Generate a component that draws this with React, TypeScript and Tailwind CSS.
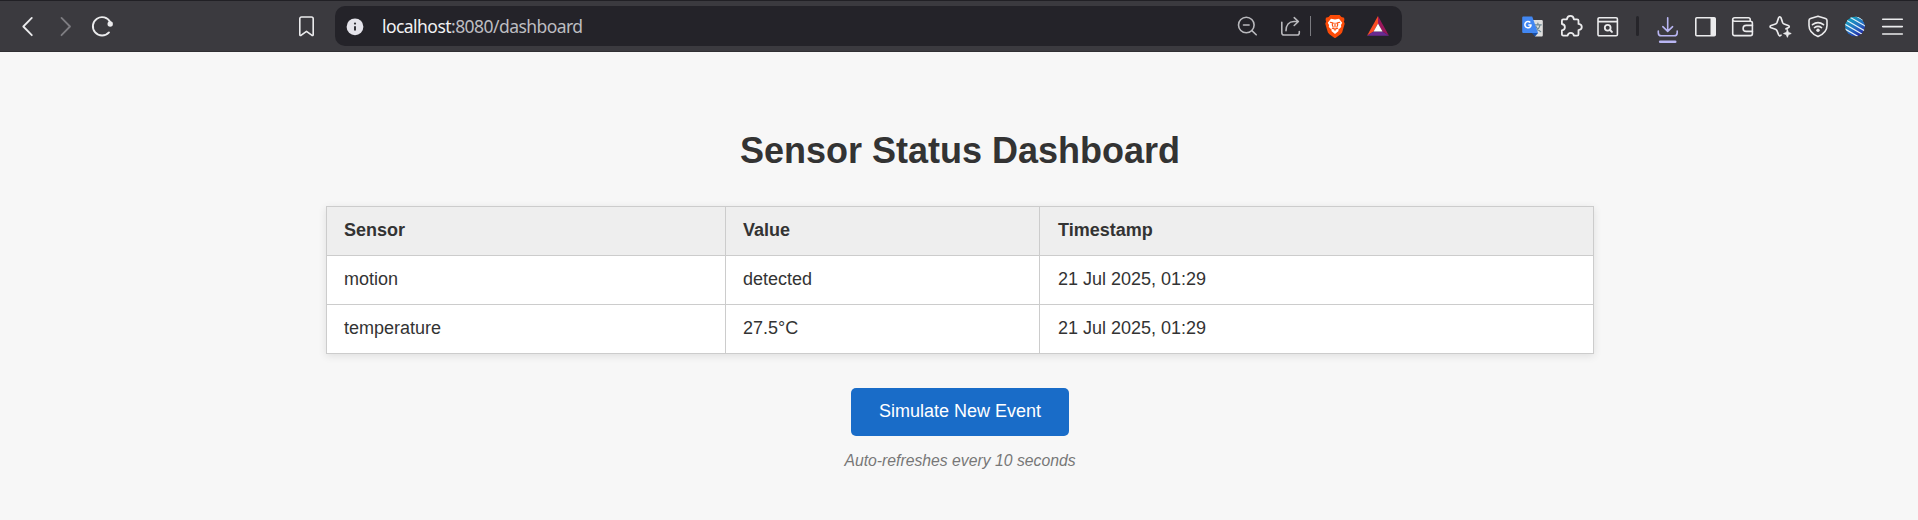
import type { ReactNode } from "react";

type IconProps = { className?: string; children: ReactNode; height?: number };

function Icon({ className = "", children, height = 24 }: IconProps) {
  return (
    <svg
      width="24"
      height={height}
      viewBox={`0 0 24 ${height}`}
      fill="none"
      stroke="currentColor"
      strokeWidth="1.6"
      strokeLinecap="round"
      strokeLinejoin="round"
      className={`shrink-0 ${className}`}
    >
      {children}
    </svg>
  );
}

function AddressBar() {
  return (
    <div className="ml-[17px] flex h-10 w-[1067px] shrink-0 items-center rounded-[10px] bg-[#242329] text-[#b9b9bd]">
      <Icon className="ml-2 text-[#e4e3ea]">
        <circle cx="12" cy="12.8" r="8.4" fill="currentColor" stroke="none" />
        <path d="M12 12.3v4.2" stroke="#333238" strokeWidth="2" strokeLinecap="butt" />
        <circle cx="12" cy="9.6" r="1.1" fill="#333238" stroke="none" />
      </Icon>
      <div className="mb-px ml-[15px] w-[852px] font-['Noto_Sans',sans-serif] text-[17.5px] leading-6 tracking-[-0.55px] whitespace-nowrap text-[#bdbdc1]">
        <span className="text-[#f1f1f4]">localhost</span>:8080/dashboard
      </div>
      <Icon>
        <circle cx="12.3" cy="11" r="7.8" />
        <path d="M9.5 11h5.6M17.9 16.6l4.3 4.2" />
      </Icon>
      <Icon className="ml-5">
        <path d="M3.8 8.3v10.4c0 1.6.8 2.3 2.3 2.3h13c1.5 0 2.2-.8 2.2-2.3v-1.2" />
        <path d="M8 16.8c0-5.500 3-9.300 8-9.300h4.300M16.200 3.700l4.200 3.800-4.200 4" />
      </Icon>
      <div className="ml-2 h-5 w-px bg-[#7b7b80]" />
      <Icon className="ml-3">
        <path
          d="M7.300 1h9.400l1.700 2.100 2.700.7.300 2.300-.5 1.500.8 2.100-2.600 8.700-1.500 1.900-5.600 4-5.600-4-1.500-1.900L2.300 9.700l.8-2.100-.5-1.500.3-2.300 2.700-.7z"
          fill="#fb4b08"
          stroke="none"
        />
        <path
          d="M8 4.800l4 .7 4-.7 3.200 4-1.200 2.300.2 2-2.900 2.700.3 1.200-3.600 2.900-3.600-2.900.3-1.200-2.900-2.700.2-2L4.800 8.800z"
          fill="#fff"
          stroke="none"
        />
        <path
          d="M7.300 8.300l2.900.8-1 1.700 1 2.300M16.700 8.300l-2.900.8 1 1.700-1 2.300M12 9v4M9.300 14.300l2.700.8 2.700-.8M12 15v1.200"
          stroke="#fb4b08"
          strokeWidth="1.1"
        />
      </Icon>
      <Icon className="ml-[19px]">
        <path d="M12 2v7.500L7.500 17.400 1 21.800z" fill="#fb4c25" stroke="none" />
        <path d="M12 2l11 19.800-6.500-4.400L12 9.500z" fill="#99175c" stroke="none" />
        <path d="M1 21.800h22l-6.500-4.400h-9z" fill="#682a91" stroke="none" />
        <path d="M12 9.500l4.500 8h-9z" fill="#fff" stroke="none" />
      </Icon>
    </div>
  );
}

function BrowserToolbar() {
  return (
    <header className="flex h-[52px] items-center border-t border-b border-t-[#212025] border-b-[#302f33] bg-[#3b3a3f] text-[#ebebed]">
      <Icon className="ml-4">
        <path d="M15.800 3.900L7.300 12.500l8.500 8.700" strokeWidth="1.800" />
      </Icon>
      <Icon className="ml-[14px] text-[#7e7d82]">
        <path d="M7.500 3.900l8.500 8.600-8.500 8.700" strokeWidth="1.800" />
      </Icon>
      <Icon className="ml-3">
        <path d="M20.300 8.200A9.200 9.200 0 1 0 19 18.400" strokeWidth="1.900" />
        <circle cx="20.200" cy="10" r="2.700" fill="currentColor" stroke="none" />
      </Icon>
      <Icon className="ml-[180px]">
        <path d="M5.800 20.400V4.700c0-1 .7-1.700 1.700-1.700h10c1 0 1.700.7 1.700 1.700v15.700c0 1.200-.8 1.400-1.500.8l-5.200-3.900-5.200 3.900c-.7.6-1.500.4-1.500-.8z" />
      </Icon>

      <AddressBar />

      <Icon className="ml-[118px]">
        <path d="M12.500 6h9c.8 0 1.300.5 1.300 1.300v13.900c0 .8-.5 1.300-1.300 1.300h-6.500z" fill="#dedede" stroke="none" />
        <path d="M14.500 10.800h6.800M17.900 9.200v1.600M20 11c-.6 2.900-2.300 5-4.900 6.600M15.900 12.500c1 2.300 2.600 4 4.800 5.200" stroke="#6f8790" strokeWidth="1.200" />
        <path d="M11.800 19l3.200 3.500 3.100-3.500z" fill="#174ea6" stroke="none" />
        <path d="M3.500 2.500h8.700l5.900 16.500H3.500c-.8 0-1.300-.5-1.300-1.300V3.800c0-.8.5-1.300 1.300-1.300z" fill="#4287f2" stroke="none" />
        <path d="M10.300 8.600a3.100 3.100 0 1 0 .8 2.300H8.300" stroke="#fff" strokeWidth="1.500" strokeLinecap="butt" />
      </Icon>
      <Icon className="ml-4">
        <path
          d="M1.900 6.700c0-.9.500-1.400 1.400-1.400h3.600c.2-2.100 1.500-3.500 3.500-3.500s3.300 1.400 3.500 3.500h3.200c.9 0 1.400.5 1.400 1.400v3.200c2.100.2 3.300 1.400 3.300 3.100s-1.200 2.900-3.300 3.100v4.100c0 .9-.5 1.400-1.400 1.400h-3.200c-.3-1.800-1.400-2.800-3.100-2.800s-2.900 1-3.200 2.800H3.300c-.9 0-1.400-.5-1.400-1.400v-3.800c1.900-.3 3-1.500 3-3.200s-1.100-2.900-3-3.200z"
          strokeWidth="1.800"
        />
      </Icon>
      <Icon className="ml-[11px]">
        <path d="M4.300 3.800h16.800c.8 0 1.300.5 1.300 1.300v15.400c0 .8-.5 1.300-1.300 1.300H4.300c-.8 0-1.300-.5-1.300-1.300V5.100c0-.8.500-1.300 1.300-1.300zM3 7.600h19.400" />
        <circle cx="12.700" cy="13.700" r="2.900" strokeWidth="1.800" />
        <path d="M15 16l1.900 1.900" strokeWidth="2" />
      </Icon>
      <div className="ml-[17px] h-5 w-[3px] rounded-full bg-[#26252a]" />
      <div className="mt-[6px] ml-[17px] flex shrink-0">
        <Icon height={30} className="text-[#b9b6f3]">
          <path d="M11.700 3.800v13.500M6.800 12.700l4.900 4.700 4.900-4.700M2.300 17v1.700c0 2 .9 3.100 3.100 3.100h12.700c2.200 0 3.100-1.100 3.100-3.100V17" />
          <path d="M4.200 27.700h15" strokeWidth="2.600" />
        </Icon>
      </div>
      <Icon className="ml-[13px]">
        <path d="M3.800 3.800h17.400c.6 0 1 .4 1 1v16c0 .6-.4 1-1 1H3.800c-.6 0-1-.4-1-1v-16c0-.6.400-1 1-1z" />
        <path d="M17.500 4h4.700v17.700h-4.700z" fill="currentColor" stroke="none" />
      </Icon>
      <Icon className="ml-[13px]">
        <path d="M20.200 7.300V5.500c0-1.100-.6-1.700-1.700-1.700H4.800C3.500 3.800 2.700 4.500 2.700 5.600s.8 1.700 2.100 1.700h15.700c1.200 0 1.900.7 1.900 1.900v10.500c0 1.200-.7 1.900-1.900 1.900H4.600c-1.200 0-1.900-.7-1.900-1.900V5.600" />
        <path d="M22.400 11.400h-6.200c-1.900 0-3.100 1.200-3.100 3s1.200 3 3.100 3h6.200" />
      </Icon>
      <Icon className="ml-[14px]">
        <path
          d="M17.900 14.900c.7-.4 1.600-.7 2.300-1.100 1.400-.6 1.400-1.700 0-2.300l-4.100-1.500c-.8-.3-1.200-.8-1.500-1.500l-1.600-4.700c-.5-1.400-1.900-1.400-2.400 0L9 8.500c-.3.800-.8 1.200-1.500 1.500l-4.400 1.500c-1.400.6-1.400 1.700 0 2.300l4.400 1.500c.8.3 1.200.8 1.500 1.500l1.600 4c.5 1.300 1.700 1.400 2.400.3"
          strokeWidth="1.700"
        />
        <path d="M19.400 15.700l1 2.800 2.800 1-2.800 1-1 2.800-1-2.800-2.800-1 2.800-1z" fill="currentColor" strokeWidth=".9" />
      </Icon>
      <Icon className="ml-[14px]">
        <path d="M12 2.200l7.500 2.400c1 .3 1.500 1 1.500 2v4.800c0 5.400-3.300 8.600-9 11.200-5.700-2.600-9-5.800-9-11.200V6.600c0-1 .5-1.700 1.500-2z" />
        <path d="M6.500 10.700c3.300-2.600 7.700-2.600 11 0M8.500 13.600c2.200-1.600 4.800-1.600 7 0" strokeWidth="1.700" />
        <circle cx="12" cy="16.300" r="1.700" fill="currentColor" stroke="none" />
      </Icon>
      <Icon className="ml-[13px]">
        <defs>
          <linearGradient id="avatarFill" x1="6" y1="3" x2="18" y2="22" gradientUnits="userSpaceOnUse">
            <stop stopColor="#14a5bd" />
            <stop offset=".55" stopColor="#246ec1" />
            <stop offset="1" stopColor="#2420a5" />
          </linearGradient>
          <clipPath id="avatarShape">
            <circle cx="12" cy="12.500" r="10" />
          </clipPath>
        </defs>
        <g clipPath="url(#avatarShape)">
          <circle cx="12" cy="12.500" r="10" fill="url(#avatarFill)" stroke="none" />
          <path d="M8 -1l20 11.500M4 1.500l22 12.700M1 4.800l24 13.900M-1 8.500l24 13.900M-2 12.700l22 12.700" stroke="#e3f2fa" strokeWidth="1.200" />
        </g>
      </Icon>
      <Icon className="ml-[13px]">
        <path d="M2.700 5.200h19.600M2.700 12.600h19.600M2.700 20h19.600" strokeWidth="1.600" />
      </Icon>
    </header>
  );
}

const readings = [
  { sensor: "motion", value: "detected", timestamp: "21 Jul 2025, 01:29" },
  { sensor: "temperature", value: "27.5°C", timestamp: "21 Jul 2025, 01:29" },
];

const cell = "border border-[#ccc] px-[17px] pt-0 pb-[2px] text-left last:pl-[18px]";

export default function App() {
  return (
    <div className="flex min-h-screen flex-col bg-[#f7f7f7] font-['Liberation_Sans',Arial,sans-serif] text-lg text-[#333]">
      <BrowserToolbar />
      <main className="flex flex-col items-center pt-[79px] pl-[2px]">
        <h1 className="text-4xl leading-10 font-bold">Sensor Status Dashboard</h1>
        <table className="mt-[35px] w-[1268px] table-fixed border-collapse bg-white shadow-[0_2px_8px_rgba(0,0,0,0.1)]">
          <colgroup>
            <col className="w-[399px]" />
            <col className="w-[314px]" />
            <col />
          </colgroup>
          <thead>
            <tr className="h-[49px] bg-[#eee]">
              <th className={cell}>Sensor</th>
              <th className={cell}>Value</th>
              <th className={cell}>Timestamp</th>
            </tr>
          </thead>
          <tbody>
            {readings.map((row) => (
              <tr key={row.sensor} className="h-[49px]">
                <td className={cell}>{row.sensor}</td>
                <td className={cell}>{row.value}</td>
                <td className={cell}>{row.timestamp}</td>
              </tr>
            ))}
          </tbody>
        </table>
        <button className="mt-[34px] h-12 w-[218px] rounded-[5px] bg-[#196cc8] pb-[2px] text-white">
          Simulate New Event
        </button>
        <p className="mt-[13px] text-[15.75px] leading-6 text-[#777] italic">Auto-refreshes every 10 seconds</p>
      </main>
    </div>
  );
}
